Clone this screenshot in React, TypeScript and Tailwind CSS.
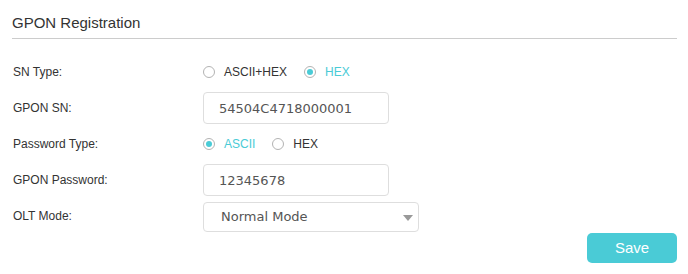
import * as React from 'react';

const Radio: React.FC<{ label: string; checked?: boolean; onClick: () => void }> = ({ label, checked, onClick }) => (
  <button type="button" onClick={onClick} className="flex items-center gap-[9px] mr-[17px]">
    <span className="w-3 h-3 rounded-full border border-[#b3b3b3] bg-white flex items-center justify-center">
      {checked && <span className="w-[6px] h-[6px] rounded-full bg-[#4acbd6]" />}
    </span>
    <span className={checked ? 'text-[#4acbd6]' : 'text-[#333333]'}>{label}</span>
  </button>
);

const Row: React.FC<{ label: string; children: React.ReactNode }> = ({ label, children }) => (
  <div className="flex items-center h-9">
    <div className="w-[191px] pl-px text-[#333333]">{label}</div>
    <div className="flex items-center">{children}</div>
  </div>
);

const App: React.FC = () => {
  const [snType, setSnType] = React.useState('hex');
  const [pwType, setPwType] = React.useState('ascii');
  const [sn, setSn] = React.useState('54504C4718000001');
  const [pw, setPw] = React.useState('12345678');

  const inputCls =
    "w-[186px] h-8 my-[2px] pl-[15px] rounded-[4px] border border-[#dedede] bg-white text-[13px] text-[#555555] font-['DejaVu_Sans',sans-serif] focus:outline-none";

  return (
    <div className="w-[688px] h-[274px] bg-white pl-3 pr-[11px] pt-[13px] font-['Liberation_Sans',Arial,sans-serif] text-[12px]">
      <div className="border-b border-[#cccccc] pb-[5px] mb-[15px]">
        <h2 className="text-[15px] leading-5 text-[#333333]">GPON Registration</h2>
      </div>

      <Row label="SN Type:">
        <Radio label="ASCII+HEX" checked={snType === 'ascii'} onClick={() => setSnType('ascii')} />
        <Radio label="HEX" checked={snType === 'hex'} onClick={() => setSnType('hex')} />
      </Row>
      <Row label="GPON SN:">
        <input className={inputCls} value={sn} onChange={(e) => setSn(e.target.value)} />
      </Row>
      <Row label="Password Type:">
        <Radio label="ASCII" checked={pwType === 'ascii'} onClick={() => setPwType('ascii')} />
        <Radio label="HEX" checked={pwType === 'hex'} onClick={() => setPwType('hex')} />
      </Row>
      <Row label="GPON Password:">
        <input className={inputCls} value={pw} onChange={(e) => setPw(e.target.value)} />
      </Row>
      <Row label="OLT Mode:">
        <div className="relative w-[216px] h-[30px] mt-[2px] rounded-[4px] border border-[#dedede] bg-white flex items-center pl-[17px] text-[13px] text-[#555555] font-['DejaVu_Sans',sans-serif]">
          Normal Mode
          <span className="absolute right-[5px] top-[12px] w-0 h-0 border-l-[5px] border-r-[5px] border-t-[6px] border-l-transparent border-r-transparent border-t-[#999999]" />
        </div>
      </Row>

      <div className="flex justify-end -mt-px">
        <button type="button" className="w-[90px] h-[30px] rounded-[5px] bg-[#4acbd6] text-white text-[15px]">
          Save
        </button>
      </div>
    </div>
  );
};

export default App;
